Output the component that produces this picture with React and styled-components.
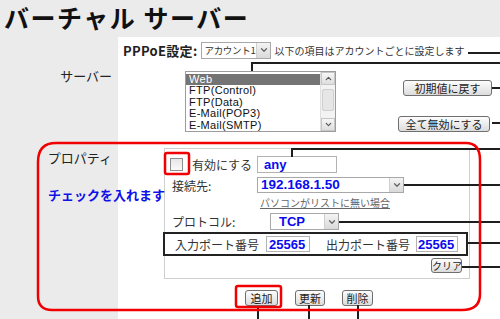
import React from "react";
import styled, { createGlobalStyle } from "styled-components";
import { ChevronDown, ChevronUp } from "lucide-react";

const GlobalStyle = createGlobalStyle`
  html, body { margin: 0; padding: 0; }
  body { font-family: "Noto Sans CJK JP", "Noto Sans", sans-serif; }
`;

const Page = styled.div`
  position: relative;
  width: 500px;
  height: 319px;
  overflow: hidden;
  background: #ebebeb;
  color: #222;
`;

const Title = styled.h1`
  margin: 0;
  height: 37px;
  padding-left: 4px;
  font-size: 25px;
  line-height: 34px;
  letter-spacing: 1.5px;
  font-weight: bold;
  color: #111;
  white-space: nowrap;
`;

const Grid = styled.div`
  display: grid;
  grid-template-columns: 118px 1fr;
  grid-template-rows: 26px 77px 1fr;
  height: 282px;
`;

const Label = styled.div`
  text-align: right;
  padding: ${(p) => p.$pt}px 6px 0 0;
  font-size: 13px;
  line-height: 16px;
  color: #222;
`;

const Cell = styled.div`
  background: #fff;
  display: flex;
  flex-direction: ${(p) => p.$dir || "row"};
  align-items: ${(p) => p.$align || "flex-start"};
  padding-left: ${(p) => p.$pl || 0}px;
`;

const Bold = styled.span`
  font-size: 13px;
  font-weight: bold;
  margin-right: 4px;
  letter-spacing: 0.3px;
`;

const Note = styled.span`
  font-size: 10px;
  margin-left: 3px;
  color: #333;
  white-space: nowrap;
`;

const SelectBox = styled.div`
  display: flex;
  align-items: center;
  box-sizing: border-box;
  width: ${(p) => p.$w}px;
  height: ${(p) => p.$h || 17}px;
  margin-left: ${(p) => p.$ml || 0}px;
  border: 1px solid #a8a8a8;
  background: #fff;
`;

const SelectText = styled.span`
  flex: 1;
  overflow: hidden;
  padding-left: ${(p) => p.$pl || 2}px;
  font-family: ${(p) => (p.$blue ? '"Liberation Sans", Arial, sans-serif' : '"Noto Sans CJK JP", sans-serif')};
  font-size: ${(p) => p.$fs || 9.5}px;
  font-weight: ${(p) => (p.$blue ? "bold" : "normal")};
  color: ${(p) => (p.$blue ? "#0a0af0" : "#333")};
  letter-spacing: ${(p) => (p.$blue ? 0 : -0.3)}px;
  white-space: nowrap;
  line-height: 14px;
`;

const SelectArrow = styled.span`
  width: 14px;
  flex: none;
  height: 100%;
  box-sizing: border-box;
  display: flex;
  align-items: center;
  justify-content: center;
  border-left: 1px solid #d0d0d0;
  background: linear-gradient(#f4f4f4, #d9d9d9);
  color: #666;
`;

const ListBox = styled.div`
  display: flex;
  box-sizing: border-box;
  width: 151px;
  height: 61px;
  margin: 8px 0 0 67px;
  border: 1px solid #9c9c9c;
  background: #fff;
`;

const Items = styled.div`
  flex: 1;
  padding-top: 2px;
`;

const Item = styled.div`
  height: 11.4px;
  line-height: 11.4px;
  padding-left: 3px;
  font-family: "Liberation Sans", Arial, sans-serif;
  font-size: 11px;
  letter-spacing: 0.3px;
  background: ${(p) => (p.$sel ? "#747474" : "transparent")};
  color: ${(p) => (p.$sel ? "#fff" : "#111")};
`;

const Scroll = styled.div`
  width: 14px;
  display: flex;
  flex-direction: column;
  background: #f3f3f3;
  border-left: 1px solid #e0e0e0;
`;

const ScrollBtn = styled.div`
  height: 13px;
  display: flex;
  align-items: center;
  justify-content: center;
  background: linear-gradient(#f6f6f6, #dedede);
  border: 1px solid #c6c6c6;
  box-sizing: border-box;
  color: #555;
`;

const Track = styled.div`
  flex: 1;
  display: flex;
  flex-direction: column;
  padding: 4px 1px;
`;

const Thumb = styled.div`
  height: 20px;
  background: #e6e6e6;
  border: 1px solid #cfcfcf;
  border-radius: 2px;
`;

const SideButtons = styled.div`
  flex: 1;
  display: flex;
  flex-direction: column;
  align-items: flex-end;
  gap: 20px;
  padding: 17px 8px 0 0;
`;

const Button = styled.button`
  box-sizing: border-box;
  width: ${(p) => p.$w}px;
  height: ${(p) => p.$h || 16}px;
  margin-right: ${(p) => p.$mr || 0}px;
  padding: 0;
  font-family: "Noto Sans CJK JP", sans-serif;
  font-size: ${(p) => p.$fs || 11}px;
  line-height: 12px;
  white-space: nowrap;
  color: #222;
  background: linear-gradient(#fdfdfd, #dcdcdc);
  border: 1px solid #6f6f6f;
  border-radius: 3px;
`;

const Panel = styled.div`
  box-sizing: border-box;
  width: 306px;
  height: 131px;
  margin: 8px 0 0 46px;
  padding: 6px 0 0 5px;
  border: 1px solid #cfcfcf;
  display: flex;
  flex-direction: column;
`;

const Row = styled.div`
  display: flex;
  align-items: center;
  height: ${(p) => p.$h}px;
  margin-top: ${(p) => p.$mt || 0}px;
`;

const FieldLabel = styled.div`
  width: ${(p) => p.$w || 87}px;
  padding-left: ${(p) => p.$pl || 0}px;
  box-sizing: border-box;
  display: flex;
  align-items: center;
  font-size: 12px;
  color: #333;
  white-space: nowrap;
`;

const Check = styled.span`
  width: 13px;
  height: 13px;
  box-sizing: border-box;
  margin-right: 9px;
  border: 1px solid #8e8e8e;
  background: linear-gradient(#e6e6e6, #fafafa);
`;

const TextInput = styled.div`
  box-sizing: border-box;
  width: ${(p) => p.$w}px;
  height: ${(p) => p.$h || 17}px;
  margin-left: ${(p) => p.$ml || 0}px;
  padding-left: ${(p) => p.$pl || 4}px;
  border: 1px solid #b3b3b3;
  font-family: "Liberation Sans", Arial, sans-serif;
  font-size: 13px;
  font-weight: bold;
  line-height: 15px;
  color: #0a0af0;
`;

const Link = styled.a`
  margin-left: 90px;
  font-size: 10px;
  color: #666;
  text-decoration: underline;
  white-space: nowrap;
`;

const PortRow = styled.div`
  box-sizing: border-box;
  display: flex;
  align-items: center;
  width: 305px;
  height: 24px;
  margin: 2px 0 0 -7px;
  padding-left: 10px;
  border: 2px solid #222;
  font-size: 12px;
  color: #333;
  white-space: nowrap;
`;

const PortLabel = styled.span`
  margin-left: ${(p) => p.$ml || 0}px;
`;

const ClearRow = styled.div`
  display: flex;
  justify-content: flex-end;
  padding-right: 7px;
  margin-top: 2px;
`;

const ActionRow = styled.div`
  display: flex;
  justify-content: center;
  gap: 17px;
  margin-top: 11px;
  width: 100%;
`;

const Hint = styled.div`
  position: absolute;
  left: 48px;
  top: 185px;
  font-size: 13px;
  font-weight: bold;
  color: #1010e8;
  white-space: nowrap;
`;

const Overlay = styled.svg`
  position: absolute;
  left: 0;
  top: 0;
  pointer-events: none;
`;

function Select({ w, h, ml, text, blue, fs, pl }) {
  return (
    <SelectBox $w={w} $h={h} $ml={ml}>
      <SelectText $blue={blue} $fs={fs} $pl={pl}>{text}</SelectText>
      <SelectArrow>
        <ChevronDown size={10} strokeWidth={3} />
      </SelectArrow>
    </SelectBox>
  );
}

const services = ["Web", "FTP(Control)", "FTP(Data)", "E-Mail(POP3)", "E-Mail(SMTP)"];

export default function App() {
  return (
    <Page>
      <GlobalStyle />
      <Title>バーチャル サーバー</Title>
      <Grid>
        <Label />
        <Cell $align="center" $pl={5}>
          <Bold>PPPoE設定:</Bold>
          <Select w={70} text="アカウント1" />
          <Note>以下の項目はアカウントごとに設定します</Note>
        </Cell>

        <Label $pt={5}>サーバー</Label>
        <Cell>
          <ListBox>
            <Items>
              {services.map((s, i) => (
                <Item key={s} $sel={i === 0}>{s}</Item>
              ))}
            </Items>
            <Scroll>
              <ScrollBtn><ChevronUp size={9} strokeWidth={3} /></ScrollBtn>
              <Track><Thumb /></Track>
              <ScrollBtn><ChevronDown size={9} strokeWidth={3} /></ScrollBtn>
            </Scroll>
          </ListBox>
          <SideButtons>
            <Button $w={89}>初期値に戻す</Button>
            <Button $w={92} $mr={2}>全て無効にする</Button>
          </SideButtons>
        </Cell>

        <Label $pt={10}>プロパティ</Label>
        <Cell $dir="column">
          <Panel>
            <Row $h={18}>
              <FieldLabel>
                <Check />
                有効にする
              </FieldLabel>
              <TextInput $w={80} $pl={6}>any</TextInput>
            </Row>
            <Row $h={16} $mt={4}>
              <FieldLabel $pl={2}>接続先:</FieldLabel>
              <Select w={147} h={16} text="192.168.1.50" blue fs={13.5} pl={3} />
            </Row>
            <Row $h={13} $mt={3}>
              <Link>パソコンがリストに無い場合</Link>
            </Row>
            <Row $h={17} $mt={4}>
              <FieldLabel $w={100} $pl={2}>プロトコル:</FieldLabel>
              <Select w={69} text="TCP" blue fs={13} pl={8} />
            </Row>
            <PortRow>
              <PortLabel>入力ポート番号</PortLabel>
              <TextInput $w={44} $h={16} $ml={7} $pl={2}>25565</TextInput>
              <PortLabel $ml={16}>出力ポート番号</PortLabel>
              <TextInput $w={42} $h={16} $ml={6} $pl={1}>25565</TextInput>
            </PortRow>
            <ClearRow>
              <Button $w={31} $h={15} $fs={10}>クリア</Button>
            </ClearRow>
          </Panel>
          <ActionRow>
            <Button $w={33}>追加</Button>
            <Button $w={30}>更新</Button>
            <Button $w={31}>削除</Button>
          </ActionRow>
        </Cell>
      </Grid>

      <Hint>チェックを入れます</Hint>

      <Overlay width="500" height="319" viewBox="0 0 500 319">
        <g stroke="#1e1e1e" strokeWidth="2" fill="none">
          <path d="M468 53 H500" />
          <path d="M252 71 V63 H500" />
          <path d="M492 88 H500" />
          <path d="M492 123 H500" />
          <path d="M292 157 V149 H500" />
          <path d="M404 185 H500" />
          <path d="M339 222 H500" />
          <path d="M468 243 H500" />
          <path d="M462 267 H500" />
          <path d="M258 307 V319" />
          <path d="M309 305 V319" />
          <path d="M358 305 V319" />
        </g>
        <g stroke="#f00000" strokeWidth="2.5" fill="none">
          <path d="M56 143 H466 Q480 143 480 160 V294 Q480 310 462 310 H52 Q38 310 38 296 V162 Q38 143 56 143 Z" />
          <rect x="165" y="153" width="24" height="21" rx="2" />
          <rect x="236" y="286" width="45" height="21" rx="2" />
        </g>
      </Overlay>
    </Page>
  );
}
